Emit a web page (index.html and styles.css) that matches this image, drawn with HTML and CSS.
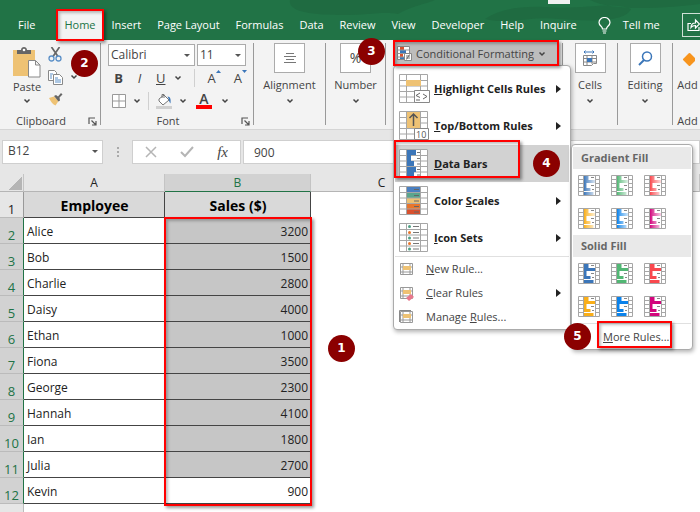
FILE: index.html
```html
<!DOCTYPE html>
<html lang="en">
<head>
    <meta charset="UTF-8">
    <meta name="viewport" content="width=device-width, initial-scale=1.0">
    <title>Data Bars</title>
    <link rel="stylesheet" href="styles.css">
</head>
<body>

<!-- Shared icons -->
<svg class="defs" width="0" height="0">
    <defs>
        <linearGradient id="fade">
            <stop offset="0" stop-color="#fff" stop-opacity="0"/>
            <stop offset="0.25" stop-color="#fff" stop-opacity="0.25"/>
            <stop offset="1" stop-color="#fff" stop-opacity="0.8"/>
        </linearGradient>
        <symbol id="chevron" viewBox="0 0 8 8"><path d="M1.5 2.5 4 5l2.500-2.500" fill="none" stroke="#444" stroke-width="1.500"/></symbol>
        <symbol id="launcher" viewBox="0 0 9 9"><path d="M1 7V1h6M3.500 3.500 7.500 7.500M8 4v4H4" fill="none" stroke="#555" stroke-width="1.200"/></symbol>
        <symbol id="grid" viewBox="0 0 29 29">
            <path d="M.5.5h28v28H.5zM7.500.5v28M21.500.5v28M.5 6.500h28M.5 12h28M.5 17.500h28M.5 23h28" fill="none" stroke="#a6a6a6"/>
        </symbol>
        <symbol id="bars" viewBox="0 0 22 21">
            <path d="M0 0h22v21H0z" fill="#fff"/>
            <path d="M5.500 1h5v4h-5zM5.500 5h12v3h-12zM5.500 8h3v5h-3zM5.500 13h7v3h-7zM5.500 17h10v3h-10z" fill="currentColor"/>
            <path d="M.5.5h21v20H.5zM5.500 .5v20M17.500.5v20M.5 4.500h5M.5 8.500h5M.5 12.500h5M.5 16.500h5M17.500 4.500h4M17.500 8.500h4M17.500 12.500h4M17.500 16.500h4" fill="none" stroke="#a6a6a6"/>
            <path d="M13 2.500h3M13 10.500h3M14 14.500h2" stroke="#888"/>
        </symbol>
        <symbol id="bars-fade" viewBox="0 0 22 21">
            <path d="M0 0h22v21H0z" fill="#fff"/>
            <path d="M5.500 1h5v4h-5zM5.500 5h12v3h-12zM5.500 8h3v5h-3zM5.500 13h7v3h-7zM5.500 17h10v3h-10z" fill="currentColor"/>
            <path d="M6 1h11v19H6z" fill="url(#fade)"/>
            <path d="M.5.5h21v20H.5zM5.500 .5v20M17.500.5v20M.5 4.500h5M.5 8.500h5M.5 12.500h5M.5 16.500h5M17.500 4.500h4M17.500 8.500h4M17.500 12.500h4M17.500 16.500h4" fill="none" stroke="#a6a6a6"/>
            <path d="M13 2.500h3M13 10.500h3M14 14.500h2" stroke="#888"/>
        </symbol>
        <symbol id="rule" viewBox="0 0 15 15">
            <path d="M1.500 1.500h12v11h-12zM4 1.500v11M11 1.500v11M1.500 5h12M1.500 10h12" fill="#fff" stroke="#999"/>
            <path d="M4 4h8v4H4z" fill="#eec274"/>
        </symbol>
    </defs>
</svg>

<header class="titlebar">
    <svg class="swirl" viewBox="0 0 460 40" width="460" height="40">
        <path d="M50 0c-2 10 14 15 50 15 30 0 44-4 58-1 14-8 28-10 37-14zM245 19c16-10 34-13 60-12 40 3 66-6 86 2-6 14-44 12-72 10-30-3-50 6-74 0zM350 0c20 10 60 10 110 4V0z" fill="#1f6b41"/>
        <path d="M308 0h22v4h-22z" fill="#f0f0f0"/>
    </svg>
    <nav class="tabs">
        <a href="#" class="file">File</a>
        <a href="#" class="active">Home<span class="mark"></span></a>
        <a href="#">Insert</a>
        <a href="#">Page Layout</a>
        <a href="#">Formulas</a>
        <a href="#">Data</a>
        <a href="#">Review</a>
        <a href="#">View</a>
        <a href="#">Developer</a>
        <a href="#">Help</a>
        <a href="#">Inquire</a>
        <a href="#" class="tell">
            <svg width="13" height="17" viewBox="0 0 13 17" fill="none" stroke="#fff" stroke-width="1.200"><path d="M4.500 12c0-3-3.500-3-3.500-6.500a5.500 5 0 0 1 11 0C12 9 8.500 9 8.500 12zM4.500 14h4M5 16h3"/></svg>
            Tell me
        </a>
    </nav>
    <button class="share" type="button" aria-label="Share">
        <svg width="14" height="14" viewBox="0 0 14 14" fill="none" stroke="#fff" stroke-width="1.200"><path d="M4 5.500H1v7h11V9M4 9.500C4 6 6 5 8.500 5V2l4 4-4 4V7.500C6.500 7.500 5 8 4 9.500z"/></svg>
    </button>
</header>

<section class="ribbon">
    <div class="group clipboard">
        <div class="tools">
            <button class="paste" type="button">
                <svg width="28" height="31" viewBox="0 0 28 31"><path d="M0 3h22v26H0z" fill="#eec274"/><path d="M4 7V3h4c0-4 6-4 6 0h4v4z" fill="#666"/><circle cx="11" cy="3" r="1.300" fill="#fff"/><path d="M15.500 13.500h7l4.500 4.500v12H15.500zM22.500 13.500V18H27" fill="#fff" stroke="#888"/></svg>
                <span>Paste</span>
                <svg width="8" height="8"><use href="#chevron"/></svg>
            </button>
            <div class="small-tools">
                <button type="button" aria-label="Cut"><svg width="15" height="15" viewBox="0 0 15 15" fill="none"><path d="M3.500 0 10 9.500M11.500 0 5 9.500" stroke="#666" stroke-width="1.700"/><circle cx="3.500" cy="11.500" r="2.500" stroke="#5a8fc7" stroke-width="1.300"/><circle cx="10.500" cy="11.500" r="2.500" stroke="#5a8fc7" stroke-width="1.300"/></svg></button>
                <button type="button" aria-label="Copy"><svg width="15" height="15" viewBox="0 0 15 15" fill="#fff" stroke="#888"><path d="M.5.5h6l2 2v8h-8z"/><path d="M5.500 4.500h6l3 3v7h-9z"/><path d="M2 4h3M2 6h2M2 8h2M7 8h3M7 10h6M7 12h6" stroke="#5a8fc7"/></svg></button>
                <button type="button" aria-label="Format Painter"><svg width="15" height="13" viewBox="0 0 15 13"><path d="m1 5 5-1.500 4.500 4.500-3 4.500C5 11.500 3 9 1 5z" fill="#eec274"/><path d="m6 3 2-1 2 1.500L13 0l1.500 1.500-3 3 .5 3-1.500 1z" fill="#666"/></svg></button>
            </div>
            <svg class="copy-chevron" width="8" height="8"><use href="#chevron"/></svg>
        </div>
        <footer>Clipboard <svg width="9" height="9"><use href="#launcher"/></svg></footer>
        <b class="badge badge-2">2</b>
    </div>

    <div class="group font">
        <div class="row selects">
            <span class="select-box name"><select aria-label="Font"><option>Calibri</option></select></span>
            <span class="select-box size"><select aria-label="Font size"><option>11</option></select></span>
        </div>
        <div class="row formats">
            <button type="button"><b>B</b></button>
            <button type="button"><i>I</i></button>
            <button type="button"><u>U</u></button>
            <svg width="8" height="8"><use href="#chevron"/></svg>
            <span class="line"></span>
            <button type="button" class="grow" aria-label="Increase font size">A<svg width="5" height="4" viewBox="0 0 5 4"><path d="m0 3 2.500-3L5 3z" fill="#3b76b9"/></svg></button>
            <button type="button" class="grow" aria-label="Decrease font size">A<svg width="5" height="4" viewBox="0 0 5 4"><path d="m0 0 2.500 3L5 0z" fill="#3b76b9"/></svg></button>
        </div>
        <div class="row colors">
            <button type="button" aria-label="Borders"><svg width="14" height="14" viewBox="0 0 14 14" fill="#fff" stroke="#999"><path d="M.5.5h13v13H.5zM7 .5v13M.5 7h13"/></svg></button>
            <svg width="8" height="8"><use href="#chevron"/></svg>
            <span class="line"></span>
            <button type="button" aria-label="Fill color"><svg width="16" height="16" viewBox="0 0 16 16"><path d="m3 6 5-4 5 5-6 5-4-4zM6 5V1.500h2V5" fill="#fff" stroke="#777"/><path d="M11.500 3.500c3 0 3.500 3 3 7-2-2-1-4-3-7z" fill="#3b76b9"/><path d="M0 13h16v3H0z" fill="#d0d0d0"/></svg></button>
            <svg width="8" height="8"><use href="#chevron"/></svg>
            <button type="button" class="font-color" aria-label="Font color">A</button>
            <svg width="8" height="8"><use href="#chevron"/></svg>
        </div>
        <footer>Font <svg width="9" height="9"><use href="#launcher"/></svg></footer>
    </div>

    <div class="group alignment">
        <button class="big" type="button">
            <span class="tile"><svg width="14" height="12" viewBox="0 0 14 12" stroke="#777"><path d="M3 1.500h8M1 4.500h12M3 7.500h8M1 10.500h12"/></svg></span>
            Alignment
            <svg width="8" height="8"><use href="#chevron"/></svg>
        </button>
    </div>
    <div class="group number">
        <button class="big" type="button">
            <span class="tile percent">%</span>
            Number
            <svg width="8" height="8"><use href="#chevron"/></svg>
        </button>
        <b class="badge badge-3">3</b>
    </div>

    <div class="group styles">
        <button class="conditional" type="button">
            <svg width="15" height="15" viewBox="0 0 15 15"><path d="M.5.5h12v13H.5z" fill="#fff" stroke="#888"/><path d="M3 1h4v3H3zM3 8h3v3H3z" fill="#d9502e"/><path d="M3 4h6v3H3zM3 11h4v2H3z" fill="#3b76b9"/><path d="M.5 4h12M.5 7.500h12M.5 11h12" stroke="#999"/><path d="M7.500 7.500h7v7h-7z" fill="#fff" stroke="#888"/><path d="M9 10h4M9 12h4M12.500 8.500l-3 5" stroke="#555" stroke-width=".8"/></svg>
            <span>Conditional Formatting</span>
            <svg width="8" height="8"><use href="#chevron"/></svg>
            <span class="mark"></span>
        </button>

        <div class="menu">
            <button class="item" type="button">
                <svg width="29" height="29" viewBox="0 0 29 29"><path d="M0 0h29v29H0z" fill="#fff"/><use href="#grid"/><path d="M7 6h15v6H7z" fill="#eec274"/><path d="M15.500 16.500h15v12h-15z" fill="#fff" stroke="#888"/><path d="m21 19-4 2.500 4 2M17 26h4M24 20l4 2.500-4 2.500" fill="none" stroke="#666"/></svg>
                <span><u>H</u>ighlight Cells Rules</span><i class="arrow"></i>
            </button>
            <button class="item" type="button">
                <svg width="29" height="29" viewBox="0 0 29 29"><path d="M0 0h29v29H0z" fill="#fff"/><use href="#grid"/><path d="M8 1h13v16H8z" fill="#eec274"/><path d="M14.500 15V3M10.500 7l4-4 4 4" fill="none" stroke="#555" stroke-width="1.500"/><path d="M15.500 17.500h14v11h-14z" fill="#fff" stroke="#888"/><text x="17" y="27" class="ten">10</text></svg>
                <span><u>T</u>op/Bottom Rules</span><i class="arrow"></i>
            </button>
            <button class="item hover" type="button">
                <svg width="29" height="29" viewBox="0 0 29 29"><path d="M0 0h29v29H0z" fill="#fff"/><use href="#grid"/><path d="M8 1h9v5H8zM8 6h4v6H8zM8 12h7v5H8zM8 18h9v5H8zM8 23h7v5H8z" fill="#3b76b9"/><path d="M18 3.500h3M18 9.500h3M18 15h3M18 20.500h3M18 26h3" stroke="#777"/></svg>
                <span><u>D</u>ata Bars</span>
                <span class="mark"></span>
                <b class="badge badge-4">4</b>
            </button>
            <button class="item" type="button">
                <svg width="29" height="29" viewBox="0 0 29 29"><path d="M0 0h29v29H0z" fill="#fff"/><path d="M8 1h13v6H8z" fill="#4a7fc0"/><path d="M8 7h13v5H8z" fill="#5ba58d"/><path d="M8 12h13v6H8z" fill="#eec274"/><path d="M8 18h13v5H8z" fill="#e8762c"/><path d="M8 23h13v5H8z" fill="#d9502e"/><use href="#grid"/><path d="M15 3.500h5M15 9.500h5M15 15h5M15 20.500h5M15 26h5" stroke="#666"/></svg>
                <span>Color <u>S</u>cales</span><i class="arrow"></i>
            </button>
            <button class="item" type="button">
                <svg width="29" height="29" viewBox="0 0 29 29"><path d="M0 0h29v29H0z" fill="#fff"/><use href="#grid"/><path d="M14 3.500h6M14 9.500h6M14 15h6M14 20.500h6M14 26h6" stroke="#777"/><g fill="#4fa084"><circle cx="10.500" cy="3.500" r="1.500"/><circle cx="10.500" cy="15" r="1.500"/><circle cx="10.500" cy="26" r="1.500"/></g><g fill="#e8762c"><circle cx="10.500" cy="9.500" r="1.500"/><circle cx="10.500" cy="20.500" r="1.500"/></g></svg>
                <span><u>I</u>con Sets</span><i class="arrow"></i>
            </button>
            <hr>
            <button class="item plain" type="button">
                <svg width="15" height="15"><use href="#rule"/></svg>
                <span><u>N</u>ew Rule...</span>
            </button>
            <button class="item plain" type="button">
                <svg width="15" height="15" viewBox="0 0 15 15"><use href="#rule" width="15" height="15"/><path d="m7 12 5-4 3 3-5 4z" fill="#e8788c"/></svg>
                <span><u>C</u>lear Rules</span><i class="arrow"></i>
            </button>
            <button class="item plain" type="button">
                <svg width="15" height="15" viewBox="0 0 15 15"><path d="M.5 12V.5H12" fill="none" stroke="#888"/><use href="#rule" width="15" height="15"/></svg>
                <span>Manage <u>R</u>ules...</span>
            </button>

            <div class="submenu">
                <h2>Gradient Fill</h2>
                <div class="swatches">
                    <button type="button" class="blue" aria-label="Blue gradient"><svg width="22" height="21"><use href="#bars-fade"/></svg></button>
                    <button type="button" class="green" aria-label="Green gradient"><svg width="22" height="21"><use href="#bars-fade"/></svg></button>
                    <button type="button" class="red" aria-label="Red gradient"><svg width="22" height="21"><use href="#bars-fade"/></svg></button>
                    <button type="button" class="orange" aria-label="Orange gradient"><svg width="22" height="21"><use href="#bars-fade"/></svg></button>
                    <button type="button" class="sky" aria-label="Light blue gradient"><svg width="22" height="21"><use href="#bars-fade"/></svg></button>
                    <button type="button" class="purple" aria-label="Purple gradient"><svg width="22" height="21"><use href="#bars-fade"/></svg></button>
                </div>
                <h2>Solid Fill</h2>
                <div class="swatches">
                    <button type="button" class="blue" aria-label="Blue"><svg width="22" height="21"><use href="#bars"/></svg></button>
                    <button type="button" class="green" aria-label="Green"><svg width="22" height="21"><use href="#bars"/></svg></button>
                    <button type="button" class="red" aria-label="Red"><svg width="22" height="21"><use href="#bars"/></svg></button>
                    <button type="button" class="orange" aria-label="Orange"><svg width="22" height="21"><use href="#bars"/></svg></button>
                    <button type="button" class="sky" aria-label="Light blue"><svg width="22" height="21"><use href="#bars"/></svg></button>
                    <button type="button" class="purple" aria-label="Purple"><svg width="22" height="21"><use href="#bars"/></svg></button>
                </div>
                <button class="more" type="button">
                    <span><u>M</u>ore Rules...</span>
                    <span class="mark"></span>
                    <b class="badge badge-5">5</b>
                </button>
            </div>
        </div>
    </div>

    <div class="group cells">
        <button class="big" type="button">
            <span class="tile"><svg width="16" height="17" viewBox="0 0 16 17"><path d="M2 2h10M3.500.5 2 2l1.500 1.500M10.500.5 12 2l-1.500 1.500" fill="none" stroke="#3b76b9"/><path d="M1.500 5.500h13v8h-3l-2 2h-8zM5 5v10M10 5v9M1.500 8.500h13M1.500 12h13" fill="#fff" stroke="#888"/><path d="M5 8h5v4H5z" fill="#3b76b9"/></svg></span>
            Cells
            <svg width="8" height="8"><use href="#chevron"/></svg>
        </button>
    </div>
    <div class="group editing">
        <button class="big" type="button">
            <span class="tile"><svg width="15" height="15" viewBox="0 0 15 15" fill="none" stroke="#3b76b9"><circle cx="9" cy="5.500" r="4.500" stroke-width="1.500"/><path d="M6 9 1 14" stroke-width="2"/></svg></span>
            Editing
            <svg width="8" height="8"><use href="#chevron"/></svg>
        </button>
    </div>
    <div class="group addins">
        <button class="big" type="button">
            <svg width="16" height="30" viewBox="0 0 16 30"><path d="M10.500 11 16 16.500 10.500 22 5 16.500z" fill="#f7941d" stroke="#f7941d" stroke-linejoin="round" stroke-width="2"/></svg>
            Add
        </button>
        <footer>Add</footer>
    </div>
</section>

<section class="formula-bar">
    <span class="select-box cell-name"><select aria-label="Name box"><option>B12</option></select></span>
    <span class="dots"></span>
    <div class="fx">
        <button type="button" aria-label="Cancel"><svg width="12" height="12" viewBox="0 0 12 12"><path d="m1 1 10 10M11 1 1 11" stroke="#b5b5b5" stroke-width="1.500"/></svg></button>
        <button type="button" aria-label="Enter"><svg width="14" height="12" viewBox="0 0 14 12"><path d="m1 6 4 4 8-9" fill="none" stroke="#b5b5b5" stroke-width="2"/></svg></button>
        <button type="button" class="fx-button">fx</button>
    </div>
    <input type="text" value="900" aria-label="Formula">
</section>

<main class="sheet">
    <table>
        <colgroup><col class="col-row"><col class="col-a"><col class="col-b"><col class="col-c"><col></colgroup>
        <thead>
            <tr><th class="corner"></th><th>A</th><th class="selected">B</th><th>C</th><th></th></tr>
        </thead>
        <tbody>
            <tr class="titles"><th>1</th><td>Employee</td><td>Sales ($)</td></tr>
            <tr><th>2</th><td>Alice</td><td>3200</td></tr>
            <tr><th>3</th><td>Bob</td><td>1500</td></tr>
            <tr><th>4</th><td>Charlie</td><td>2800</td></tr>
            <tr><th>5</th><td>Daisy</td><td>4000</td></tr>
            <tr><th>6</th><td>Ethan</td><td>1000</td></tr>
            <tr><th>7</th><td>Fiona</td><td>3500</td></tr>
            <tr><th>8</th><td>George</td><td>2300</td></tr>
            <tr><th>9</th><td>Hannah</td><td>4100</td></tr>
            <tr><th>10</th><td>Ian</td><td>1800</td></tr>
            <tr><th>11</th><td>Julia</td><td>2700</td></tr>
            <tr class="current"><th>12</th><td>Kevin</td><td>900</td></tr>
        </tbody>
    </table>
    <div class="next-row"></div>
    <span class="mark range"></span>
    <b class="badge badge-1">1</b>
</main>

</body>
</html>
```
FILE: styles.css
```css
* {
    box-sizing: border-box;
}
body {
    margin: 0;
    height: 100vh;
    overflow: hidden;
    display: flex;
    flex-direction: column;
    font-family: "Open Sans", "Noto Sans", sans-serif;
    font-size: 11px;
    line-height: 16px;
    color: #444;
    background-color: #fff;
}
button, select, input {
    font: inherit;
    color: inherit;
    background: none;
    border: none;
    padding: 0;
    margin: 0;
}
button {
    position: relative;
    white-space: nowrap;
}
svg {
    display: block;
    flex: none;
}
.defs {
    position: absolute;
}

/* Numbered callouts and red frames */
.mark {
    position: absolute;
    inset: -1px;
    border: 2px solid #f00;
    box-shadow: 2px 2px 3px rgba(0, 0, 0, 0.4), inset 2px 2px 3px rgba(0, 0, 0, 0.25);
    z-index: 3;
}
.badge {
    position: absolute;
    z-index: 4;
    width: 27px;
    height: 27px;
    border-radius: 50%;
    background-color: #8b0000;
    color: #fff;
    font: bold 12px/27px "DejaVu Sans", sans-serif;
    text-align: center;
}
.badge-1 { left: 328px; top: 161px; }
.badge-2 { left: 71px; top: 7px; }
.badge-3 { left: 32px; top: -5px; }
.badge-4 { right: 9px; top: 5px; }
.badge-5 { left: -9px; top: -1px; }

/* Title bar */
.titlebar {
    position: relative;
    flex: none;
    display: flex;
    align-items: flex-end;
    justify-content: space-between;
    height: 40px;
    background-color: #217346;
}
.swirl {
    position: absolute;
    top: 0;
    right: 0;
}
.tabs {
    position: relative;
    display: flex;
    gap: 16px;
    padding-left: 18px;
}
.tabs a {
    display: flex;
    align-items: center;
    height: 30px;
    color: #fff;
    text-decoration: none;
    white-space: nowrap;
}
.tabs .file {
    margin-right: 6px;
}
.tabs .active {
    position: relative;
    padding: 0 7px;
    margin-right: -7px;
    color: #217346;
    background-color: #f3f3f3;
}
.tabs .tell {
    gap: 12px;
    margin-left: 5px;
}
.share {
    height: 24px;
    width: 18px;
    margin-bottom: 3px;
    padding-left: 4px;
    border: 1px solid #cfe0d6;
    border-right: none;
    overflow: hidden;
}

/* Ribbon */
.ribbon {
    flex: none;
    display: flex;
    height: 90px;
    padding: 3px 0 4px;
    background-color: #f3f3f3;
    border-bottom: 1px solid #d5d5d5;
}
.group {
    position: relative;
    flex: none;
    display: flex;
    flex-direction: column;
    border-right: 1px solid #999;
}
.group footer {
    position: relative;
    height: 16px;
    margin: auto 0 -4px;
    padding-right: 18px;
    text-align: center;
    white-space: nowrap;
}
.group footer svg {
    position: absolute;
    right: 3px;
    top: 4px;
}
.clipboard { width: 101px; }
.font { width: 153px; }
.alignment { width: 72px; }
.number { width: 60px; }
.styles { width: 177px; }
.cells { width: 55px; }
.editing { width: 55px; }
.tools {
    display: flex;
    gap: 7px;
    padding: 4px 0 0 13px;
}
.paste {
    display: flex;
    flex-direction: column;
    align-items: center;
}
.paste span {
    margin: 1px 0 2px;
}
.small-tools {
    display: flex;
    flex-direction: column;
    gap: 8px;
}
.copy-chevron {
    margin-top: 26px;
}
.select-box {
    position: relative;
    display: block;
    background-color: #fff;
    border: 1px solid #ababab;
}
.select-box::after {
    content: "";
    position: absolute;
    right: 4px;
    top: 9px;
    border: 3px solid transparent;
    border-top-color: #555;
    border-bottom: none;
}
.select-box select {
    appearance: none;
    width: 100%;
    height: 20px;
    padding-left: 2px;
}
.row {
    display: flex;
    align-items: center;
    height: 23px;
    padding-left: 11px;
}
.selects {
    gap: 2px;
    padding-left: 7px;
    font-size: 12px;
}
.select-box.name { width: 87px; }
.select-box.size { width: 49px; }
.formats {
    gap: 12px;
    padding-left: 13px;
    font-size: 13px;
}
.formats button {
    min-width: 9px;
}
.formats > svg {
    margin-left: -3px;
}
.grow {
    display: flex;
    margin-right: 1px;
}
.line {
    width: 1px;
    height: 18px;
    background-color: #d0d0d0;
}
.colors {
    gap: 7px;
}
.font-color {
    width: 16px;
    border-bottom: 4px solid #f00;
    font-size: 14px;
    font-weight: 600;
    line-height: 13px;
}
.colors .font-color {
    margin: 0 2px;
}
.big {
    display: flex;
    flex-direction: column;
    align-items: center;
    gap: 4px;
}
.tile {
    display: flex;
    align-items: center;
    justify-content: center;
    width: 31px;
    height: 30px;
    background-color: #fff;
    border: 1px solid #ababab;
}
.percent {
    font-size: 14px;
}
.addins {
    flex: 1;
    align-items: center;
    padding-left: 2px;
    border: none;
}
.addins footer {
    padding: 0;
}

/* Conditional formatting menu */
.conditional {
    display: flex;
    align-items: center;
    gap: 4px;
    width: 164px;
    height: 24px;
    margin: -2px 0 0 8px;
    padding: 1px 3px 0;
    background-color: #bdbdbd;
}
.conditional span {
    flex: none;
}
.menu {
    position: absolute;
    z-index: 2;
    left: 7px;
    top: 22px;
    width: 178px;
    padding: 4px 1px 0;
    background-color: #fff;
    border: 1px solid #ababab;
    border-radius: 4px;
    box-shadow: 1px 2px 4px rgba(0, 0, 0, 0.3);
}
.item {
    display: flex;
    align-items: center;
    gap: 6px;
    width: 100%;
    height: 37px;
    padding: 0 8px 0 4px;
    font-weight: bold;
    color: #222;
}
.item.hover {
    margin-top: 1px;
    background-color: #d2d2d2;
}
.item .mark {
    inset: -5px 49px 4px -1px;
}
.item.plain {
    height: 24px;
    gap: 12px;
    font-weight: normal;
    color: #444;
}
.item svg {
    overflow: visible;
}
.arrow {
    margin-left: auto;
    border: 4px solid transparent;
    border-left: 5px solid #222;
    border-right: none;
}
.ten {
    font-size: 9px;
    font-weight: normal;
    fill: #555;
}
hr {
    height: 1px;
    margin: 0;
    border: none;
    background-color: #e0e0e0;
}
.submenu {
    position: absolute;
    left: 177px;
    top: 78px;
    width: 122px;
    padding: 2px 1px 0;
    background-color: #fff;
    border: 1px solid #ababab;
    border-radius: 4px;
    box-shadow: 1px 2px 4px rgba(0, 0, 0, 0.3);
}
.submenu h2 {
    margin: 0;
    padding-left: 8px;
    font-size: 11px;
    line-height: 22px;
    color: #666;
    background-color: #e9e9e9;
}
.swatches {
    display: grid;
    grid-template-columns: repeat(3, 22px);
    gap: 12px 11px;
    padding: 6px 5px;
}
.blue { color: #3b76b9; }
.green { color: #52b774; }
.red { color: #f9484e; }
.orange { color: #f9ae19; }
.sky { color: #0b82ea; }
.purple { color: #d2057c; }
.more {
    width: 100%;
    height: 26px;
    padding-left: 30px;
    text-align: left;
    border-top: 1px solid #e0e0e0;
}
.more .mark {
    inset: -3px 19px 1px 24px;
}

/* Formula bar */
.formula-bar {
    flex: none;
    display: flex;
    align-items: center;
    height: 44px;
    padding-left: 2px;
    font-size: 12px;
    background-color: #e6e6e6;
}
.formula-bar > * {
    height: 24px;
    border: 1px solid #cfcfcf;
    background-color: #fff;
}
.cell-name {
    width: 101px;
}
.cell-name select {
    padding-left: 5px;
}
.formula-bar .dots {
    width: 2px;
    height: 11px;
    margin: 0 13px 0 14px;
    border: none;
    background: repeating-linear-gradient(#aaa 0 2px, #e6e6e6 2px 4px);
}
.fx {
    display: flex;
    align-items: center;
    justify-content: space-between;
    width: 109px;
    padding: 0 12px;
    margin-right: 2px;
}
.fx-button {
    font: italic 15px "Liberation Serif", serif;
}
.formula-bar input {
    flex: 1;
    min-width: 0;
    padding-left: 10px;
}

/* Worksheet */
.sheet {
    position: relative;
    flex: 1;
    display: flex;
    flex-direction: column;
    min-height: 0;
    overflow: hidden;
}
table {
    table-layout: fixed;
    width: 100%;
    border-collapse: separate;
    border-spacing: 0;
    font-size: 12px;
    color: #222;
}
.col-row { width: 24px; }
.col-a { width: 141px; }
.col-b { width: 146px; }
.col-c { width: 142px; }
th, td {
    height: 26px;
    padding: 0;
    line-height: 16px;
}
th {
    font-weight: normal;
    background-color: #e6e6e6;
}
thead th {
    height: 18px;
    border-right: 1px solid #c4c4c4;
    border-bottom: 1px solid #b5b5b5;
}
thead .selected {
    color: #217346;
    background-color: #d2d2d2;
    border-bottom: 1px solid #217346;
}
.corner {
    background: linear-gradient(135deg, transparent 50%, #b5b5b5 50%) 9px 3px / 13px 13px no-repeat #e6e6e6;
}
tbody th {
    padding-top: 8px;
    font-size: 13px;
    color: #217346;
    background-color: #d2d2d2;
    border-right: 1px solid #217346;
    border-bottom: 1px solid #bbb;
}
td {
    padding: 2px 2px 0 3px;
    border-right: 1px solid #444;
    border-bottom: 1px solid #444;
}
td:last-child {
    text-align: right;
    background-color: #c6c6c6;
}
.titles th {
    color: #222;
    background-color: #e6e6e6;
    border-right-color: #999;
}
.titles td {
    font-size: 14px;
    font-weight: bold;
    text-align: center;
    color: #000;
    background-color: #d9d9d9;
}
.current td:last-child {
    background-color: #fff;
}
.next-row {
    flex: 1;
    width: 24px;
    background-color: #e6e6e6;
    border-right: 1px solid #bbb;
}
.range {
    inset: 43px auto auto 164px;
    width: 148px;
    height: 289px;
}
```
